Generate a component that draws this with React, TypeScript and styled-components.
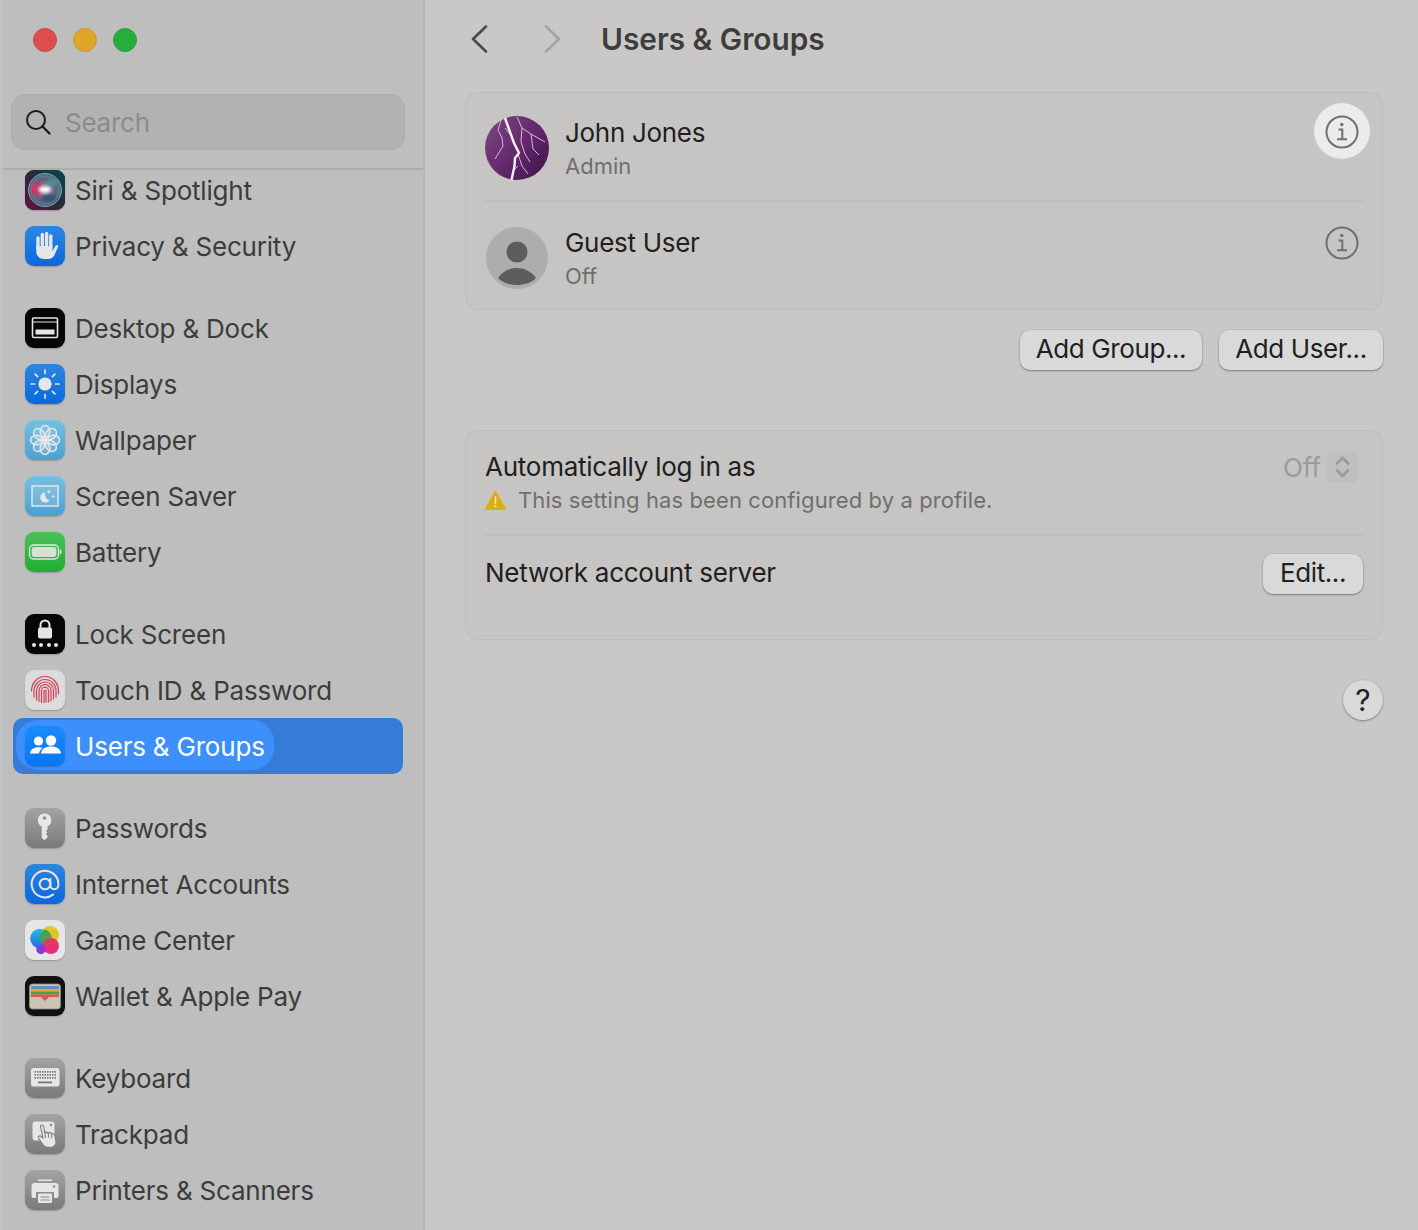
import React from "react";
import styled, { createGlobalStyle } from "styled-components";
import { AtSign } from "lucide-react";

const Global = createGlobalStyle`
  html, body { margin: 0; padding: 0; background: #c9c8c6; }
  body { font-family: Inter, "Liberation Sans", sans-serif; -webkit-font-smoothing: antialiased; }
  * { box-sizing: border-box; }
`;

const Window = styled.div`
  width: 1418px; height: 1230px; display: flex; overflow: hidden; background: #c9c8c6;
`;
const Sidebar = styled.aside`
  width: 425px; height: 1230px; flex: none; display: flex; flex-direction: column;
  background: #bebebe; border-left: 2px solid #c2c2c2; border-right: 2px solid #b6b6b5;
`;
const Lights = styled.div`
  height: 94px; flex: none; display: flex; gap: 16px; padding: 28px 0 0 31px;
`;
const Light = styled.span<{ $c: string; $b: string }>`
  width: 24px; height: 24px; border-radius: 50%; background: ${p => p.$c}; border: 1px solid ${p => p.$b};
`;
const SearchBox = styled.div`
  flex: none; height: 56px; margin: 0 18px 0 9px; padding-left: 13px; display: flex; align-items: center; gap: 14px;
  background: #b2b2b2; border: 1px solid #adadad; border-radius: 14px;
  font-size: 26px; color: #8b8b8b; letter-spacing: -0.25px;
`;
const Rule = styled.div`
  flex: none; height: 2px; margin-top: 18px; background: #adadad;
`;
const List = styled.nav`
  flex: 1; min-height: 0; overflow: hidden; display: flex; flex-direction: column; gap: 26px;
  & > :first-child { margin-top: -8px; }
`;
const Group = styled.div`
  display: flex; flex-direction: column;
`;
const Row = styled.div<{ $active?: boolean }>`
  height: 56px; margin: 0 20px 0 11px; padding-left: 3px; border-radius: 10px; flex: none;
  display: flex; align-items: flex-start;
  background: ${p => (p.$active ? "#347cd8" : "transparent")};
`;
const RowPill = styled.div<{ $active?: boolean }>`
  height: 50px; margin-top: 2px; padding: 2px 9px 0; display: flex; align-items: center; gap: 10px;
  border-radius: 22px; font-size: 26px; line-height: 32px; letter-spacing: -0.2px; white-space: nowrap;
  color: ${p => (p.$active ? "#ffffff" : "#3c3c3c")};
  background: ${p => (p.$active ? "#3d8ffb" : "transparent")};
`;
const RowLabel = styled.span`
  display: block; padding-top: 2px;
`;
const Tile = styled.span<{ $bg: string }>`
  width: 40px; height: 40px; flex: none; border-radius: 9px; overflow: hidden; display: block;
  background: ${p => p.$bg}; box-shadow: 0 1px 1.5px rgba(0,0,0,.22);
  & > svg { display: block; width: 40px; height: 40px; }
`;
const AtIcon = styled(AtSign)`
  padding: 4px;
`;

const Main = styled.main`
  flex: 1; min-width: 0; display: flex; flex-direction: column; padding: 0 35px 0 40px;
`;
const Header = styled.header`
  height: 92px; flex: none; display: flex; align-items: flex-start; padding: 25px 0 0 4px;
`;
const NavBtn = styled.span<{ $w: number }>`
  width: ${p => p.$w}px; flex: none; display: block; height: 28px;
  & > svg { display: block; }
`;
const Title = styled.h1`
  margin: -2px 0 0; font-size: 29.8px; line-height: 32px; font-weight: 600; color: #3d3d3d;
`;
const Card = styled.section<{ $h: number }>`
  height: ${p => p.$h}px; flex: none; display: flex; flex-direction: column;
  background: #c6c5c3; border: 1px solid #bdbcba; border-radius: 12px; padding: 0 19px;
`;
const UserRow = styled.div<{ $top: number; $h: number }>`
  height: ${p => p.$h}px; flex: none; display: flex; align-items: flex-start; padding-top: ${p => p.$top}px;
`;
const Divider = styled.div`
  height: 1.5px; flex: none; background: #bebdbb;
`;
const Avatar = styled.span<{ $top: number }>`
  width: 64px; height: 64px; flex: none; margin-top: ${p => p.$top}px; display: block;
  & > svg { display: block; }
`;
const UserText = styled.div<{ $top: number }>`
  flex: 1; margin: ${p => p.$top}px 0 0 16px; display: flex; flex-direction: column;
`;
const Name = styled.div`
  font-size: 26px; line-height: 32px; letter-spacing: -0.3px; color: #202020;
`;
const Sub = styled.div`
  font-size: 22px; line-height: 30px; margin-top: 2px; color: #6f6f6e;
`;
const InfoBtn = styled.span<{ $on?: boolean }>`
  width: 56px; height: 56px; flex: none; margin-right: -7px; padding-top: 2px; border-radius: 50%;
  display: flex; align-items: center; justify-content: center;
  background: ${p => (p.$on ? "#ebebea" : "transparent")};
`;
const Actions = styled.div`
  flex: none; display: flex; justify-content: flex-end; gap: 17px; margin: 20px 0 60px;
`;
const Btn = styled.button<{ $w: number }>`
  width: ${p => p.$w}px; height: 40px; flex: none; padding: 0 0 2px; border: 0; border-radius: 10px;
  font: 400 26px/1 Inter, "Liberation Sans", sans-serif; letter-spacing: -0.4px; color: #1f1f1f; white-space: nowrap;
  background: #d9d9d9; box-shadow: 0 1px 2px rgba(0,0,0,.35), 0 0 0 .5px rgba(0,0,0,.08);
`;
const SettingRow = styled.div<{ $h: number; $top: number }>`
  height: ${p => p.$h}px; flex: none; display: flex; justify-content: space-between; align-items: flex-start;
  padding-top: ${p => p.$top}px;
`;
const SettingText = styled.div`
  display: flex; flex-direction: column;
`;
const SettingLabel = styled.div<{ $top?: number }>`
  font-size: 26px; line-height: 32px; letter-spacing: -0.25px; color: #202020; margin-top: ${p => p.$top ?? 0}px;
`;
const Note = styled.div`
  margin-top: 2px; height: 30px; display: flex; align-items: center; gap: 12px;
  font-size: 22px; letter-spacing: 0.1px; color: #6f6f6e;
  & > svg { flex: none; }
`;
const Selector = styled.div`
  display: flex; align-items: center; gap: 6px; font-size: 26px; color: #9c9c9b; margin-right: 5px; height: 32px;
`;
const Stepper = styled.span`
  width: 31px; height: 32px; border-radius: 7px; background: #bfbfbd; display: block;
  & > svg { display: block; }
`;
const Footer = styled.div`
  flex: none; display: flex; justify-content: flex-end; margin-top: 40px;
`;
const Help = styled.span`
  width: 40px; height: 40px; border-radius: 50%; display: flex; align-items: center; justify-content: center;
  background: #d9d9d9; box-shadow: 0 1px 2px rgba(0,0,0,.35), 0 0 0 .5px rgba(0,0,0,.08);
  font-size: 30px; font-weight: 400; color: #222;
`;

const W = "#e6e6e6";

const Svg: React.FC<{ children: React.ReactNode }> = ({ children }) => (
  <svg viewBox="0 0 40 40" xmlns="http://www.w3.org/2000/svg">{children}</svg>
);

const SiriIcon = () => (
  <Svg>
    <defs>
      <linearGradient id="sb" x1="0" y1="1" x2="1" y2="0">
        <stop offset="0" stopColor="#6a0f42" /><stop offset=".5" stopColor="#2a2a3c" /><stop offset="1" stopColor="#07444a" />
      </linearGradient>
      <radialGradient id="so" cx=".5" cy=".5" r=".5">
        <stop offset="0" stopColor="#9aa0ac" /><stop offset=".6" stopColor="#6b5f80" /><stop offset="1" stopColor="#3f7280" />
      </radialGradient>
      <filter id="sf" x="-30%" y="-30%" width="160%" height="160%"><feGaussianBlur stdDeviation="1.6" /></filter>
    </defs>
    <rect width="40" height="40" fill="url(#sb)" />
    <circle cx="20" cy="20" r="16.500" fill="url(#so)" />
    <g filter="url(#sf)">
      <ellipse cx="11.500" cy="19" rx="6" ry="7" fill="#d82f6a" opacity=".85" />
      <ellipse cx="27" cy="13" rx="6" ry="3.500" fill="#3f9f92" opacity=".8" />
      <ellipse cx="24" cy="28" rx="8" ry="4" fill="#30506f" opacity=".9" />
      <ellipse cx="20" cy="19.500" rx="6" ry="3" fill="#ffffff" />
    </g>
    <circle cx="20" cy="20" r="16.500" fill="none" stroke="#7fa6aa" strokeWidth="1" />
    <circle cx="20" cy="20" r="14" fill="none" stroke="#8fa0aa" strokeWidth=".5" opacity=".7" />
  </Svg>
);
const HandIcon = () => (
  <Svg>
    <path d="M13 23V12M17.300 19V8.500M21.600 19V7.500M25.800 20V10" stroke={W} strokeWidth="3.400" strokeLinecap="round" fill="none" />
    <path d="M11.300 20h16.200v5l3.200-5.400c.9-1.400 3-.5 2.400 1.100L29.500 29c-1.300 2.600-3.500 4-6.500 4h-3.500c-5 0-8.200-3-8.200-7.500z" fill={W} />
  </Svg>
);
const DesktopIcon = () => (
  <Svg>
    <rect x="7.500" y="10" width="25" height="19.500" rx="1.500" fill="none" stroke={W} strokeWidth="1.600" />
    <path d="M8 14h24" stroke={W} strokeWidth="1" />
    <rect x="10.500" y="21.500" width="19" height="5" rx=".5" fill={W} />
  </Svg>
);
const SunIcon = () => (
  <Svg>
    <circle cx="20" cy="20" r="6.600" fill={W} />
    {[0, 45, 90, 135, 180, 225, 270, 315].map(a => (
      <line key={a} x1="20" y1="9.500" x2="20" y2="6" stroke={W} strokeWidth="1.700" strokeLinecap="round" transform={`rotate(${a} 20 20)`} />
    ))}
  </Svg>
);
const FlowerIcon = () => (
  <Svg>
    {[0, 45, 90, 135, 180, 225, 270, 315].map(a => (
      <ellipse key={a} cx="20" cy="11.500" rx="4.800" ry="6" fill="rgba(255,255,255,.12)" stroke={W} strokeWidth="1.500" transform={`rotate(${a} 20 20)`} />
    ))}
    <circle cx="20" cy="20" r="2.600" fill={W} />
  </Svg>
);
const SaverIcon = () => (
  <Svg>
    <rect x="7" y="10" width="26" height="20" fill="rgba(255,255,255,.12)" stroke={W} strokeWidth="1.500" />
    <path d="M20.500 16.500a5 5 0 1 0 4 7.700 5.500 5.500 0 0 1-4-7.700z" fill={W} />
    <path d="M24 13.500l.7 1.500 1.500.7-1.500.7-.7 1.500-.7-1.500-1.500-.7 1.500-.7zM28 18.500l.6 1.300 1.300.6-1.300.6-.6 1.300-.6-1.300-1.300-.6 1.300-.6z" fill={W} />
  </Svg>
);
const BatteryIcon = () => (
  <Svg>
    <rect x="4.500" y="13" width="29" height="14" rx="4" fill="none" stroke={W} strokeWidth="1.400" />
    <rect x="6.600" y="15" width="24.800" height="10" rx="2.400" fill={W} opacity=".9" />
    <path d="M35 17.500c1.200.3 1.600 1.300 1.600 2.500s-.4 2.200-1.600 2.500z" fill={W} />
  </Svg>
);
const LockIcon = () => (
  <Svg>
    <path d="M15.500 14v-3a4.500 4.500 0 0 1 9 0v3" fill="none" stroke={W} strokeWidth="2" />
    <rect x="13" y="13.500" width="14" height="11" rx="2" fill={W} />
    {[9, 16, 24, 31].map(x => <circle key={x} cx={x} cy="31" r="2" fill={W} />)}
  </Svg>
);
const FingerprintIcon = () => (
  <Svg>
    <g fill="none" stroke="#d63a55" strokeWidth="1.200" strokeLinecap="round">
      <path d="M6.500 21c0-8 6-14.500 13.500-14.500S33.500 13 33.500 21v3" />
      <path d="M9 27v-6c0-6.500 5-11.500 11-11.500S31 14.500 31 21v6" />
      <path d="M11.500 30v-9c0-5 3.800-9 8.500-9s8.500 4 8.500 9v8" />
      <path d="M14 31.500V21c0-3.500 2.700-6.500 6-6.500s6 3 6 6.500v10" />
      <path d="M16.500 32.500V21c0-2 1.600-3.800 3.500-3.800s3.500 1.800 3.500 3.800v11" />
      <path d="M19 32.500V21.500c0-1.400 2-1.400 2 0V32" />
    </g>
  </Svg>
);
const UsersIcon = () => (
  <Svg>
    <circle cx="13.500" cy="15" r="4.600" fill="#fff" />
    <path d="M5 27.500c.6-4.200 3.800-6.300 8.500-6.300 1.600 0 3 .2 4.200.8-2 1.200-3.200 3-3.700 5.500z" fill="#fff" />
    <circle cx="26" cy="14.500" r="5.200" fill="#fff" />
    <path d="M16 27.500c.5-4.600 4.300-7 10-7s9.500 2.400 10 7z" fill="#fff" />
  </Svg>
);
const KeyIcon = () => (
  <Svg>
    <path d="M19.500 5.500a6.800 6.800 0 0 1 3 12.900v3.100l-1.600 1.500 1.600 1.500-1.600 1.500 1.600 1.600v2l-3 2.600-2.800-2.400V18.400a6.800 6.800 0 0 1 2.800-12.900z" fill={W} />
    <circle cx="19.500" cy="10" r="1.800" fill="#8f8f8f" />
  </Svg>
);
const GameIcon = () => (
  <Svg>
    <defs>
      <linearGradient id="gb" x1="0" y1="0" x2="0" y2="1"><stop offset="0" stopColor="#1ec3e6" /><stop offset="1" stopColor="#2d63e0" /></linearGradient>
      <linearGradient id="gp" x1="0" y1="0" x2="0" y2="1"><stop offset="0" stopColor="#e8394f" /><stop offset="1" stopColor="#e42c86" /></linearGradient>
    </defs>
    <circle cx="15" cy="18.500" r="9.800" fill="url(#gb)" />
    <circle cx="25" cy="15" r="9" fill="#dcc820" />
    <path d="M19.500 9.500a9 9 0 0 1 5 14.800 9.800 9.800 0 0 1-8.500-1.500 9.800 9.800 0 0 1 3.500-13.300z" fill="#4a9e55" />
    <circle cx="26" cy="26" r="8" fill="url(#gp)" />
    <circle cx="16" cy="29.500" r="4.700" fill="#8a38d8" />
  </Svg>
);
const WalletIcon = () => (
  <Svg>
    <rect x="4.500" y="8" width="31" height="25" rx="3" fill="#c9c5b4" stroke="#8a8a8a" strokeWidth=".8" />
    <rect x="6" y="10" width="28" height="3" fill="#5b8fc7" />
    <rect x="6" y="13" width="28" height="2.500" fill="#e5a531" />
    <rect x="6" y="15.500" width="28" height="3" fill="#4aa04e" />
    <path d="M6 18.500h28v2.500H24l-3 3.200c-.6.600-1.400.6-2 0L16 21H6z" fill="#dc5a4e" />
  </Svg>
);
const KeyboardIcon = () => (
  <Svg>
    <rect x="6" y="10" width="28.500" height="18.500" rx="2.500" fill={W} />
    <g fill="#777">
      {[0, 1, 2].flatMap(r => [0, 1, 2, 3, 4, 5, 6, 7, 8].map(c => (
        <rect key={`${r}-${c}`} x={9.500 + c * 2.500} y={13 + r * 3} width="1.500" height="1.700" />
      )))}
      <rect x="13" y="23.500" width="14" height="1.800" />
    </g>
  </Svg>
);
const TrackpadIcon = () => (
  <Svg>
    <rect x="7.500" y="7.500" width="22" height="19" rx="3" fill={W} />
    <circle cx="26" cy="11" r="1.300" fill="#8a8a8a" />
    <path d="M15.500 12.500c0-2 3-2 3.300 0l.9 6.500c.8-1.300 3-1.100 3.400.4.8-1.200 3-1 3.400.6 1-.8 3-.3 3.300 1.300l1.200 6c.5 3.500-2 6-5.500 6h-2.500c-2.300 0-3.800-.8-5-2.500l-4.500-6.500c-1-1.600 1-3.200 2.500-2l2 1.800z" fill={W} stroke="#7b7b7b" strokeWidth="1.100" strokeLinejoin="round" />
    <path d="M20 19.500l.6 4M23.300 20l.5 3.500M26.600 21l.4 3" stroke="#7b7b7b" strokeWidth="1" fill="none" strokeLinecap="round" />
  </Svg>
);
const PrinterIcon = () => (
  <Svg>
    <path d="M13 9.500h14v1.500H13z" fill={W} />
    <path d="M9.500 13h21a3 3 0 0 1 3 3v10a2 2 0 0 1-2 2H29v-6H11v6H8.500a2 2 0 0 1-2-2V16a3 3 0 0 1 3-3z" fill={W} />
    <circle cx="29" cy="16.500" r="1.200" fill="#8a8a8a" />
    <rect x="13" y="23.500" width="14" height="9.500" rx="1" fill={W} />
    <path d="M15.500 27h9M15.500 30h9" stroke="#8a8a8a" strokeWidth="1" />
  </Svg>
);

const grayTile = "linear-gradient(#a3a3a3, #7a7a7a)";
const blueTile = "linear-gradient(#2c86e0, #0a68dc)";
const skyTile = "linear-gradient(#78c0e0, #4aa0d2)";

type Item = { label: string; bg: string; icon: React.ReactNode; active?: boolean };
const groups: Item[][] = [
  [
    { label: "Siri & Spotlight", bg: "#222", icon: <SiriIcon /> },
    { label: "Privacy & Security", bg: blueTile, icon: <HandIcon /> },
  ],
  [
    { label: "Desktop & Dock", bg: "#060606", icon: <DesktopIcon /> },
    { label: "Displays", bg: blueTile, icon: <SunIcon /> },
    { label: "Wallpaper", bg: skyTile, icon: <FlowerIcon /> },
    { label: "Screen Saver", bg: skyTile, icon: <SaverIcon /> },
    { label: "Battery", bg: "linear-gradient(#4cc05a, #20ad31)", icon: <BatteryIcon /> },
  ],
  [
    { label: "Lock Screen", bg: "#060606", icon: <LockIcon /> },
    { label: "Touch ID & Password", bg: "#dcdcdc", icon: <FingerprintIcon /> },
    { label: "Users & Groups", bg: "linear-gradient(#1a8bfa, #0a75f2)", icon: <UsersIcon />, active: true },
  ],
  [
    { label: "Passwords", bg: grayTile, icon: <KeyIcon /> },
    { label: "Internet Accounts", bg: blueTile, icon: <AtIcon color={W} strokeWidth={1.5} /> },
    { label: "Game Center", bg: "#e6e6e6", icon: <GameIcon /> },
    { label: "Wallet & Apple Pay", bg: "#111", icon: <WalletIcon /> },
  ],
  [
    { label: "Keyboard", bg: grayTile, icon: <KeyboardIcon /> },
    { label: "Trackpad", bg: grayTile, icon: <TrackpadIcon /> },
    { label: "Printers & Scanners", bg: grayTile, icon: <PrinterIcon /> },
  ],
];

const InfoIcon = () => (
  <svg width="34" height="34" viewBox="0 0 34 34">
    <circle cx="17" cy="17" r="15.500" fill="none" stroke="#6f6f6e" strokeWidth="2" />
    <circle cx="16.800" cy="9.500" r="1.700" fill="#6f6f6e" />
    <path d="M13.500 14.500h3.800v9.500M12 24.200h10" fill="none" stroke="#6f6f6e" strokeWidth="2" />
  </svg>
);

const LightningAvatar = () => (
  <svg width="64" height="64" viewBox="0 0 64 64">
    <defs>
      <linearGradient id="la" x1="0" y1="0" x2="1" y2=".8">
        <stop offset="0" stopColor="#7a4a80" /><stop offset=".5" stopColor="#682c70" /><stop offset="1" stopColor="#431650" />
      </linearGradient>
    </defs>
    <circle cx="32" cy="32" r="32" fill="url(#la)" />
    <path d="M16 4l-3 10 4 8 1 8-5 8-3 5M32 1l5 11 9 6 14 8M37 12l-1 14 4 12 5 8M46 18l2 15 6 6M33 38l4 12 6 8M33 50l-4 4M25 18l-5-6" fill="none" stroke="#dcb4de" strokeWidth="1" />
    <path d="M20 2l5 14 4 11 5 10-4 5-.5 8-3 14" fill="none" stroke="#f6f0f3" strokeWidth="2.400" strokeLinejoin="round" />
  </svg>
);
const GuestAvatar = () => (
  <svg width="64" height="64" viewBox="0 0 64 64">
    <circle cx="32" cy="32" r="31" fill="#adadac" />
    <circle cx="32" cy="26" r="10.500" fill="#5d5d5d" />
    <path d="M13 52c5-7 12-10 19-10s14 3 19 10c-5 5-12 7-19 7s-14-2-19-7z" fill="#5d5d5d" />
  </svg>
);

export default function App() {
  return (
    <Window>
      <Global />
      <Sidebar>
        <Lights>
          <Light $c="#dd4f4d" $b="#c9474a" />
          <Light $c="#dfa526" $b="#c99a2c" />
          <Light $c="#26ad3c" $b="#2aa03c" />
        </Lights>
        <SearchBox>
          <svg width="26" height="26" viewBox="0 0 26 26">
            <circle cx="11" cy="11" r="9" fill="none" stroke="#1b1b1b" strokeWidth="2" />
            <path d="M17.500 17.500l7 7" stroke="#1b1b1b" strokeWidth="2.400" strokeLinecap="round" />
          </svg>
          Search
        </SearchBox>
        <Rule />
        <List>
          {groups.map((g, i) => (
            <Group key={i}>
              {g.map(it => (
                <Row key={it.label} $active={it.active}>
                  <RowPill $active={it.active}>
                    <Tile $bg={it.bg}>{it.icon}</Tile>
                    <RowLabel>{it.label}</RowLabel>
                  </RowPill>
                </Row>
              ))}
            </Group>
          ))}
        </List>
      </Sidebar>
      <Main>
        <Header>
          <NavBtn $w={73}>
            <svg width="20" height="28" viewBox="0 0 20 28">
              <path d="M17 1.500L4 14l13 12.500" fill="none" stroke="#4a4a4a" strokeWidth="2.600" strokeLinecap="round" strokeLinejoin="round" />
            </svg>
          </NavBtn>
          <NavBtn $w={59}>
            <svg width="20" height="28" viewBox="0 0 20 28">
              <path d="M4 1.500L17 14 4 26.500" fill="none" stroke="#a3a3a2" strokeWidth="2.600" strokeLinecap="round" strokeLinejoin="round" />
            </svg>
          </NavBtn>
          <Title>Users &amp; Groups</Title>
        </Header>
        <Card $h={218}>
          <UserRow $top={10} $h={107}>
            <Avatar $top={13}><LightningAvatar /></Avatar>
            <UserText $top={14}>
              <Name>John Jones</Name>
              <Sub>Admin</Sub>
            </UserText>
            <InfoBtn $on><InfoIcon /></InfoBtn>
          </UserRow>
          <Divider />
          <UserRow $top={12} $h={107}>
            <Avatar $top={12}><GuestAvatar /></Avatar>
            <UserText $top={13}>
              <Name>Guest User</Name>
              <Sub>Off</Sub>
            </UserText>
            <InfoBtn><InfoIcon /></InfoBtn>
          </UserRow>
        </Card>
        <Actions>
          <Btn $w={182}>Add Group...</Btn>
          <Btn $w={164}>Add User...</Btn>
        </Actions>
        <Card $h={210}>
          <SettingRow $h={103} $top={20}>
            <SettingText>
              <SettingLabel>Automatically log in as</SettingLabel>
              <Note>
                <svg width="21" height="21" viewBox="0 0 21 21">
                  <path d="M10.500 2L20 19H1z" fill="#dfad07" stroke="#dfad07" strokeWidth="1.800" strokeLinejoin="round" />
                  <path d="M10.500 7v6.500" stroke="#f2f0e6" strokeWidth="1.500" strokeLinecap="round" />
                  <circle cx="10.500" cy="16.300" r="1" fill="#f2f0e6" />
                </svg>
                This setting has been configured by a profile.
              </Note>
            </SettingText>
            <Selector>
              Off
              <Stepper>
                <svg width="31" height="32" viewBox="0 0 31 32">
                  <path d="M10 12.500l5.500-5.500 5.500 5.500M10 19.500l5.500 5.500 5.500-5.500" fill="none" stroke="#9a9a99" strokeWidth="2.600" strokeLinecap="round" strokeLinejoin="round" />
                </svg>
              </Stepper>
            </Selector>
          </SettingRow>
          <Divider />
          <SettingRow $h={104} $top={18}>
            <SettingLabel $top={3}>Network account server</SettingLabel>
            <Btn $w={100}>Edit...</Btn>
          </SettingRow>
        </Card>
        <Footer><Help>?</Help></Footer>
      </Main>
    </Window>
  );
}
